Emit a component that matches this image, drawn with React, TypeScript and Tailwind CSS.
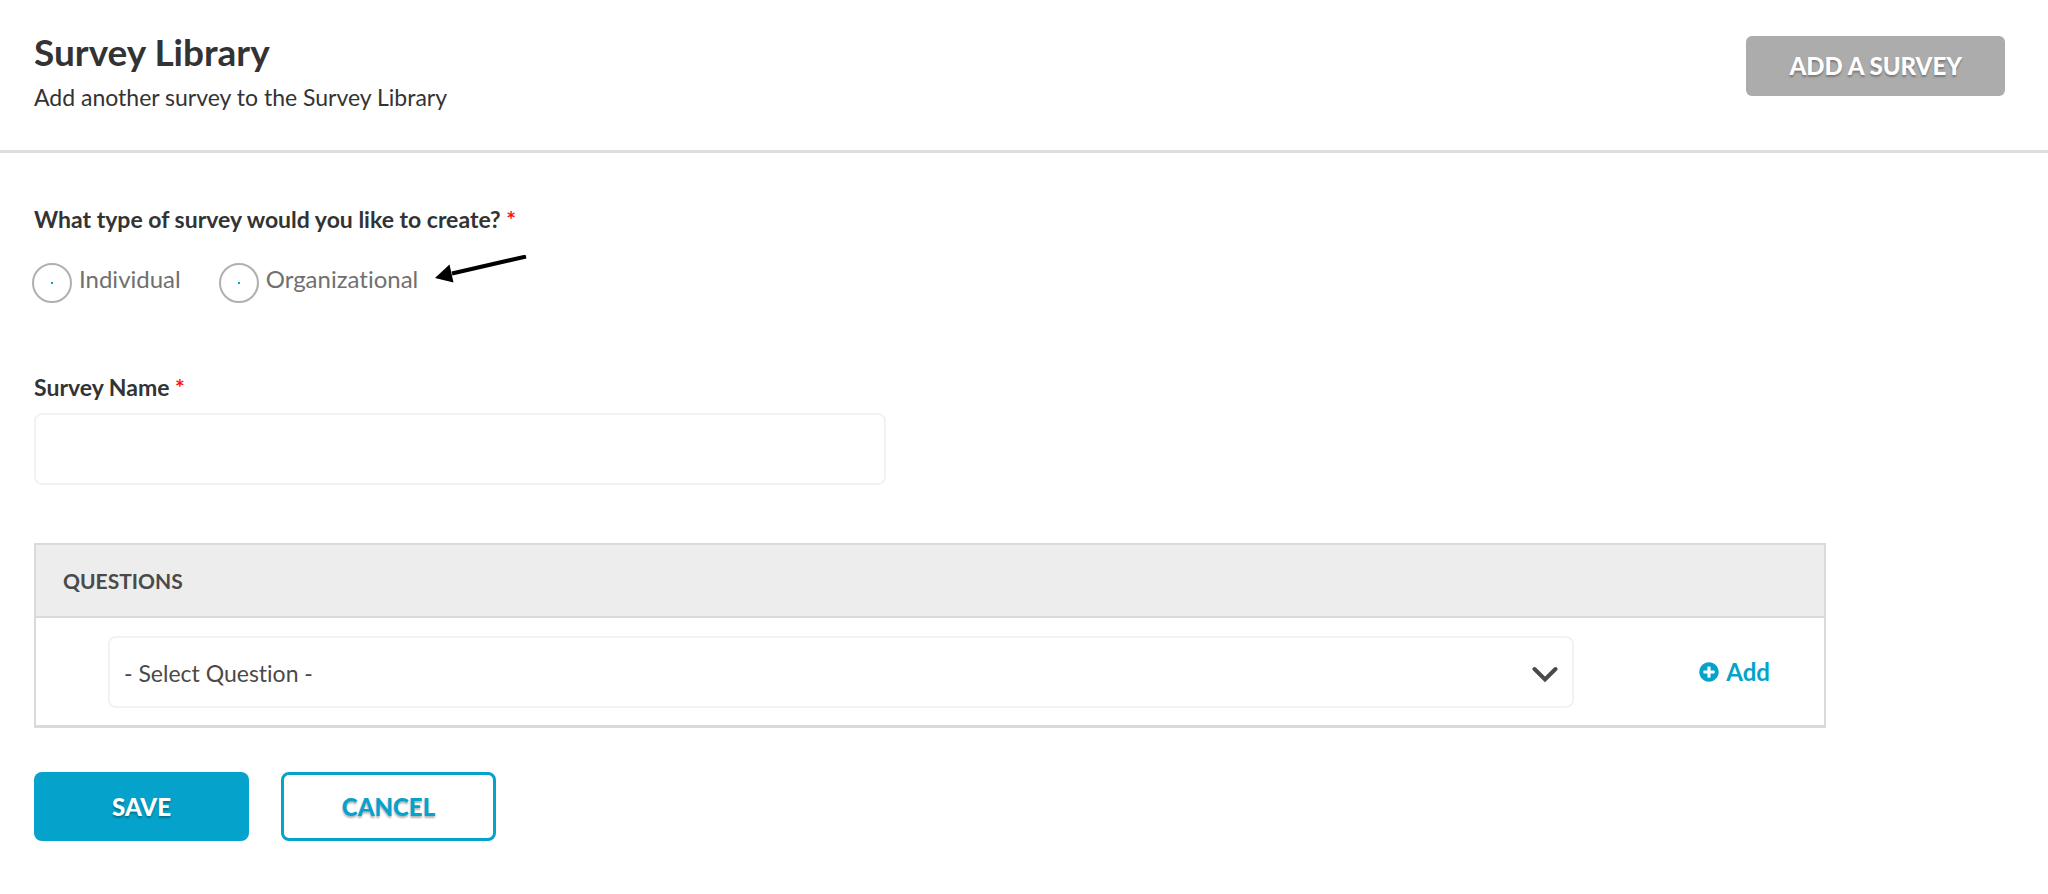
import { useState } from "react";
import { FaPlusCircle } from "react-icons/fa";

const surveyTypes = ["Individual", "Organizational"];

function Required() {
  return <span className="text-[#ff0f0f]">*</span>;
}

function PageHeader() {
  return (
    <header className="flex items-start justify-between border-b-3 border-[#dedede] pt-[30px] pr-[43px] pb-9 pl-[34px]">
      <div>
        <h1 className="text-[37px] leading-[44px] font-bold">Survey Library</h1>
        <p className="mt-1.5 text-[23px] leading-[34px]">Add another survey to the Survey Library</p>
      </div>
      <button
        type="button"
        className="mt-1.5 h-[60px] rounded-md bg-[#acacac] px-[43px] text-[24px] font-black text-white text-shadow-[0_2px_2px_rgb(0_0_0/0.3)]"
      >
        ADD A SURVEY
      </button>
    </header>
  );
}

function PointerArrow() {
  return (
    <svg className="mb-7 ml-4 h-7 w-24" viewBox="0 0 96 28" aria-hidden="true">
      <path d="M18 18.500 L92 1.500" stroke="#000" strokeWidth="4" fill="none" />
      <path d="M1 23 L15.500 9.500 L19.500 27.500 Z" fill="#000" />
    </svg>
  );
}

function SurveyTypeField() {
  const [type, setType] = useState("");
  return (
    <fieldset>
      <legend className="text-[23px] leading-8 font-bold">
        What type of survey would you like to create? <Required />
      </legend>
      <div className="mt-5 flex items-center">
        <div className="-ml-0.5 flex gap-[38px]">
          {surveyTypes.map((name) => (
            <label key={name} className="flex items-center gap-[7px] text-[24px] leading-8 text-[#707070]">
              <input
                type="radio"
                name="survey-type"
                value={name}
                checked={type === name}
                onChange={() => setType(name)}
                className="size-10 appearance-none rounded-full border-2 border-[#b0b0b0] bg-[radial-gradient(circle,#05a2cb_1px,transparent_1px)] checked:bg-[radial-gradient(circle,#05a2cb_10px,transparent_11px)]"
              />
              <span className="pb-2">{name}</span>
            </label>
          ))}
        </div>
        <PointerArrow />
      </div>
    </fieldset>
  );
}

function QuestionsPanel() {
  return (
    <section className="mt-[58px] max-w-[1792px] border-2 border-b-3 border-[#dadada]">
      <h2 className="border-b-2 border-[#dadada] bg-[#ededed] px-[27px] pt-5 pb-[19px] text-[21px] leading-8 font-bold text-[#4a4a4a]">
        QUESTIONS
      </h2>
      <div className="flex items-center pt-[18px] pr-[54px] pb-[17px] pl-[72px]">
        <div className="relative grow">
          <select
            aria-label="Question"
            className="block h-[72px] w-full appearance-none rounded-lg border-2 border-[#f2f2f2] bg-white px-3.5 pt-0.5 text-[23px] text-[#4a4a4a]"
          >
            <option>- Select Question -</option>
          </select>
          <svg
            className="pointer-events-none absolute top-7 right-3.5 h-5 w-7"
            viewBox="0 0 28 20"
            fill="none"
            stroke="#4a4a4a"
            strokeWidth="4"
            aria-hidden="true"
          >
            <path d="M2.500 5 L13 15.500 L23.500 5" strokeLinecap="round" />
          </svg>
        </div>
        <button
          type="button"
          className="ml-[125px] flex shrink-0 items-center gap-[7px] pb-px text-[24px] leading-8 font-bold text-[#05a2cb]"
        >
          <FaPlusCircle className="size-5" />
          Add
        </button>
      </div>
    </section>
  );
}

export default function App() {
  return (
    <div className="min-h-screen bg-white font-['Lato',sans-serif] text-[#333] [font-variant-ligatures:none]">
      <PageHeader />
      <main className="px-[34px] pt-[50px] pb-12">
        <form onSubmit={(event) => event.preventDefault()}>
          <SurveyTypeField />
          <div className="mt-15">
            <label htmlFor="survey-name" className="block text-[23px] leading-8 font-bold">
              Survey Name <Required />
            </label>
            <input
              id="survey-name"
              type="text"
              className="mt-2.5 block h-[72px] w-full max-w-[852px] rounded-lg border-2 border-[#f2f2f2] px-4 text-[23px]"
            />
          </div>
          <QuestionsPanel />
          <div className="mt-11 flex gap-8">
            <button
              type="submit"
              className="h-[69px] w-[215px] rounded-lg bg-[#05a2cb] text-[24px] font-black text-white text-shadow-[0_2px_2px_rgb(0_0_0/0.3)]"
            >
              SAVE
            </button>
            <button
              type="button"
              className="h-[69px] w-[215px] rounded-lg border-3 border-[#05a2cb] bg-white text-[24px] font-black text-[#05a2cb] text-shadow-[0_2px_2px_rgb(0_0_0/0.3)]"
            >
              CANCEL
            </button>
          </div>
        </form>
      </main>
    </div>
  );
}
